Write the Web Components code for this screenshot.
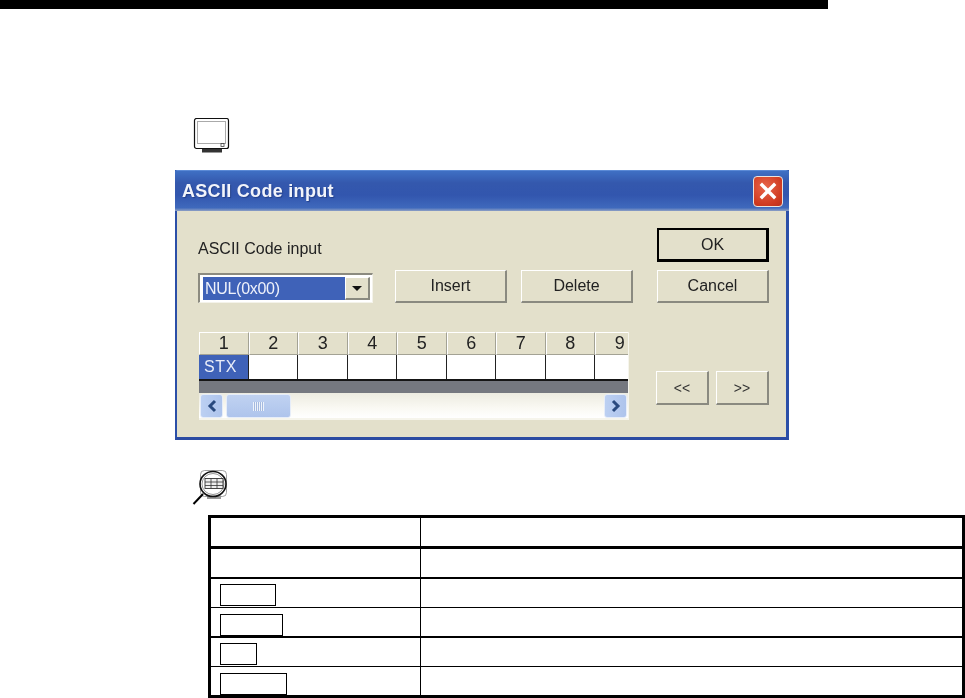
<!DOCTYPE html>
<html>
<head>
<meta charset="utf-8">
<title>ASCII Code input</title>
<style>
  html, body { margin: 0; background: #fff; }
  body { width: 965px; height: 698px; overflow: hidden; font-family: "Liberation Sans", sans-serif; }
</style>
</head>
<body>
<manual-page>
  <screen-icon></screen-icon>
  <xp-dialog heading="ASCII Code input">
    <code-input></code-input>
  </xp-dialog>
  <lens-icon></lens-icon>
  <key-table></key-table>
</manual-page>

<script>
class ManualPage extends HTMLElement {
  constructor() {
    super();
    this.attachShadow({ mode: "open" });
    this.shadowRoot.innerHTML = `
      <style>
        :host { display: block; }
        .rule { width: 828px; height: 9px; background: #000; margin-bottom: 109px; }
      </style>
      <div class="rule"></div>
      <slot></slot>
    `;
  }
}

class ScreenIcon extends HTMLElement {
  constructor() {
    super();
    this.attachShadow({ mode: "open" });
    this.shadowRoot.innerHTML = `
      <style>
        :host { display: block; height: 35px; margin: 0 0 17px 193px; }
        svg { display: block; filter: blur(0.3px); }
      </style>
      <svg width="38" height="35" viewBox="0 0 38 35" fill="none">
        <rect x="1.5" y="0.5" width="34" height="30" rx="2" fill="#fff" stroke="#111" stroke-width="1.2"/>
        <rect x="4.5" y="3.5" width="28" height="22" fill="#fff" stroke="#aaa" stroke-width="1"/>
        <rect x="28" y="25.5" width="3" height="3" stroke="#444" stroke-width="0.8"/>
        <rect x="9" y="31" width="20" height="3.5" fill="#333"/>
      </svg>
    `;
  }
}

class LensIcon extends HTMLElement {
  constructor() {
    super();
    this.attachShadow({ mode: "open" });
    this.shadowRoot.innerHTML = `
      <style>
        :host { display: block; height: 36px; margin: 29px 0 10px 192px; }
        svg { display: block; filter: blur(0.3px); }
      </style>
      <svg width="38" height="36" viewBox="0 0 38 36" fill="none">
        <rect x="8.5" y="1.5" width="26" height="26" rx="4" fill="#fff" stroke="#888" stroke-width="0.8"/>
        <rect x="15" y="26.5" width="14" height="3.5" fill="#999"/>
        <ellipse cx="21" cy="15" rx="13" ry="12.5" stroke="#111" stroke-width="1.6"/>
        <ellipse cx="21" cy="15" rx="11" ry="10.5" stroke="#666" stroke-width="0.7"/>
        <rect x="13" y="9.5" width="18" height="10" fill="#eee" stroke="#333" stroke-width="0.9"/>
        <path d="M13 13h18M13 16.5h18M19 9.5v10M25 9.5v10" stroke="#333" stroke-width="0.8"/>
        <path d="M1.5 35L11 25" stroke="#000" stroke-width="2"/>
      </svg>
    `;
  }
}

class XpDialog extends HTMLElement {
  constructor() {
    super();
    this.attachShadow({ mode: "open" });
    this.shadowRoot.innerHTML = `
      <style>
        :host {
          display: block;
          width: 614px;
          height: 270px;
          margin-left: 175px;
          box-sizing: border-box;
          border-top: 1px solid #5b8ad6;
          border-left: 2px solid #2b4fa8;
          border-right: 3px solid #2b4fa8;
          border-bottom: 3px solid #2b4ba2;
          background: #e3e0cb;
          filter: blur(0.55px);
        }
        .title {
          height: 40px;
          margin: 0 -3px 0 -2px;
          padding: 0 6px 0 7px;
          display: flex;
          align-items: center;
          justify-content: space-between;
          background: linear-gradient(#3f70c4 0, #3458ad 30%, #3256ae 60%, #3f69bc 92%, #8ea0c4 100%);
        }
        .title span {
          font: bold 18px "Liberation Sans", sans-serif;
          letter-spacing: 0.3px;
          color: #f2f4fa;
          text-shadow: 1px 1px 1px #24408a;
          white-space: nowrap;
        }
        .close {
          width: 30px;
          height: 31px;
          box-sizing: border-box;
          border: 1px solid #e9e4df;
          border-radius: 4px;
          background: radial-gradient(circle at 40% 35%, #e8654a, #cf3a20 70%, #b9301c);
          display: flex;
          align-items: center;
          justify-content: center;
        }
      </style>
      <div class="title">
        <span></span>
        <div class="close">
          <svg width="18" height="18" viewBox="0 0 18 18"><path d="M3 3l12 12M15 3L3 15" stroke="#fff" stroke-width="3.4" stroke-linecap="square"/></svg>
        </div>
      </div>
      <slot></slot>
    `;
  }

  connectedCallback() {
    this.shadowRoot.querySelector(".title span").textContent = this.getAttribute("heading");
  }
}

class XpButton extends HTMLElement {
  constructor() {
    super();
    this.attachShadow({ mode: "open" });
    this.shadowRoot.innerHTML = `
      <style>
        :host {
          display: flex;
          align-items: center;
          justify-content: center;
          box-sizing: border-box;
          width: 112px;
          height: 33px;
          background: #e3e0cb;
          color: #222;
          font: 16px "Liberation Sans", sans-serif;
          border-top: 1px solid #fff;
          border-left: 1px solid #fff;
          border-right: 2px solid #8a8a80;
          border-bottom: 2px solid #8a8a80;
        }
        :host([default]) {
          height: 34px;
          border: 2px solid #000;
          border-right-width: 3px;
          border-bottom-width: 3px;
        }
        :host([small]) { width: 53px; height: 34px; font-size: 14px; color: #333; }
      </style>
      <slot></slot>
    `;
  }
}

class XpCombo extends HTMLElement {
  constructor() {
    super();
    this.attachShadow({ mode: "open" });
    this.shadowRoot.innerHTML = `
      <style>
        :host {
          display: flex;
          box-sizing: border-box;
          width: 175px;
          height: 30px;
          padding: 2px 2px 2px 3px;
          background: #fff;
          border-top: 2px solid #8c8b80;
          border-left: 2px solid #8c8b80;
          border-right: 1px solid #f4f3ea;
          border-bottom: 1px solid #f4f3ea;
        }
        .value {
          flex: 1;
          padding-left: 2px;
          display: flex;
          align-items: center;
          background: #3f62b8;
          color: #eef1fa;
          font: 16px "Liberation Sans", sans-serif;
          letter-spacing: -0.3px;
        }
        .arrow {
          width: 25px;
          display: flex;
          align-items: center;
          justify-content: center;
          box-sizing: border-box;
          background: #e3e0cb;
          border-top: 1px solid #fff;
          border-left: 1px solid #fff;
          border-right: 2px solid #8a8a80;
          border-bottom: 2px solid #8a8a80;
        }
        .arrow i { width: 0; height: 0; border: 5px solid transparent; border-top: 5px solid #111; border-bottom: 0; }
      </style>
      <div class="value"><slot></slot></div>
      <div class="arrow"><i></i></div>
    `;
  }
}

class XpScrollbar extends HTMLElement {
  constructor() {
    super();
    this.attachShadow({ mode: "open" });
    this.shadowRoot.innerHTML = `
      <style>
        :host {
          display: flex;
          align-items: stretch;
          height: 25px;
          padding: 1px 1px 0 1px;
          box-sizing: border-box;
          background: linear-gradient(#ecebe0, #faf9f3 60%, #fff);
        }
        .btn, .thumb {
          box-sizing: border-box;
          border: 1px solid #e6edf9;
          border-radius: 3px;
          background: linear-gradient(90deg, #bcd0f2, #aec4ec);
          display: flex;
          align-items: center;
          justify-content: center;
        }
        .btn { width: 23px; }
        .thumb { width: 65px; margin-left: 3px; background: linear-gradient(#c0d2f1, #aec4ec); }
        .track { flex: 1; }
        .grip { width: 11px; height: 9px; background: repeating-linear-gradient(90deg, #eef3fb 0 1px, #a4b9df 1px 2px); }
      </style>
      <div class="btn"><svg width="14" height="14" viewBox="0 0 14 14"><path d="M10 2L5 7l5 5" fill="none" stroke="#2a4a7e" stroke-width="3"/></svg></div>
      <div class="thumb"><div class="grip"></div></div>
      <div class="track"></div>
      <div class="btn"><svg width="14" height="14" viewBox="0 0 14 14"><path d="M4 2l5 5-5 5" fill="none" stroke="#2a4a7e" stroke-width="3"/></svg></div>
    `;
  }
}

class CodeGrid extends HTMLElement {
  constructor() {
    super();
    this.attachShadow({ mode: "open" });
    const cols = [1, 2, 3, 4, 5, 6, 7, 8, 9];
    this.shadowRoot.innerHTML = `
      <style>
        :host {
          display: block;
          width: 430px;
          height: 88px;
          box-sizing: border-box;
          border-right: 1px solid #f6f5ec;
          border-bottom: 2px solid #f6f5ec;
          overflow: hidden;
          font: 16px "Liberation Sans", sans-serif;
        }
        .cells {
          display: grid;
          grid-template-columns: repeat(9, 49.5px);
          grid-template-rows: 23px 24px;
          width: 445.5px;
        }
        .head {
          box-sizing: border-box;
          display: flex;
          align-items: center;
          justify-content: center;
          font-size: 18px;
          color: #222;
          background: #e3e0cb;
          border-top: 1px solid #fff;
          border-left: 1px solid #fff;
          border-right: 1px solid #a3a294;
          border-bottom: 1px solid #a3a294;
        }
        .cell { box-sizing: border-box; background: #fff; border-right: 1px solid #222; }
        .cell.on { background: #3f62b8; color: #e9edf8; padding-left: 5px; display: flex; align-items: center; letter-spacing: 0.6px; }
        .line { height: 2px; background: #151515; }
        .empty { height: 12px; background: #75787f; }
      </style>
      <div class="cells">
        ${cols.map((n) => `<div class="head">${n}</div>`).join("")}
        ${cols.map((n) => (n === 1 ? `<div class="cell on">STX</div>` : `<div class="cell"></div>`)).join("")}
      </div>
      <div class="line"></div>
      <div class="empty"></div>
      <xp-scrollbar></xp-scrollbar>
    `;
  }
}

class CodeInput extends HTMLElement {
  constructor() {
    super();
    this.attachShadow({ mode: "open" });
    this.shadowRoot.innerHTML = `
      <style>
        :host {
          display: grid;
          grid-template-columns: 434px 112px;
          column-gap: 24px;
          padding: 17px 0 0 22px;
          font: 16px "Liberation Sans", sans-serif;
          color: #222;
        }
        .label { height: 42px; margin-left: -1px; display: flex; align-items: center; }
        .row { display: flex; align-items: flex-end; height: 33px; margin-bottom: 29px; }
        xp-combo { margin: 0 22px 0 -1px; }
        .row xp-button + xp-button { margin-left: 14px; }
        .side { display: flex; flex-direction: column; }
        .side xp-button[default] { margin-bottom: 8px; }
        .nav { display: flex; gap: 7px; margin: 68px 0 0 -1px; }
      </style>
      <div>
        <div class="label">ASCII Code input</div>
        <div class="row">
          <xp-combo>NUL(0x00)</xp-combo>
          <xp-button>Insert</xp-button>
          <xp-button>Delete</xp-button>
        </div>
        <code-grid></code-grid>
      </div>
      <div class="side">
        <xp-button default>OK</xp-button>
        <xp-button>Cancel</xp-button>
        <div class="nav">
          <xp-button small>&lt;&lt;</xp-button>
          <xp-button small>&gt;&gt;</xp-button>
        </div>
      </div>
    `;
  }
}

class KeyTable extends HTMLElement {
  constructor() {
    super();
    this.attachShadow({ mode: "open" });
    const rows = [
      { h: 28, line: 3 },
      { h: 28, line: 2 },
      { h: 28, line: 1, key: 56, gap: 1 },
      { h: 28, line: 2, key: 63, gap: 0 },
      { h: 28, line: 1, key: 37, gap: 1 },
      { h: 28, line: 0, key: 67, gap: 0 },
    ];
    this.shadowRoot.innerHTML = `
      <style>
        :host {
          display: block;
          margin-left: 208px;
          width: 757px;
          box-sizing: border-box;
          border: 3px solid #000;
        }
        .row { display: grid; grid-template-columns: 210px 1fr; border-bottom: 0 solid #000; }
        .a { border-right: 1px solid #000; padding-left: 9px; display: flex; align-items: flex-end; }
        .key { display: block; box-sizing: border-box; height: 22px; border: 1px solid #000; }
      </style>
      ${rows.map((r) => `
        <div class="row" style="height:${r.h}px;border-bottom-width:${r.line}px">
          <div class="a">${r.key ? `<span class="key" style="width:${r.key}px;margin-bottom:${r.gap}px"></span>` : ""}</div>
          <div></div>
        </div>`).join("")}
    `;
  }
}

customElements.define("manual-page", ManualPage);
customElements.define("screen-icon", ScreenIcon);
customElements.define("lens-icon", LensIcon);
customElements.define("xp-dialog", XpDialog);
customElements.define("xp-button", XpButton);
customElements.define("xp-combo", XpCombo);
customElements.define("xp-scrollbar", XpScrollbar);
customElements.define("code-grid", CodeGrid);
customElements.define("code-input", CodeInput);
customElements.define("key-table", KeyTable);
</script>
</body>
</html>
